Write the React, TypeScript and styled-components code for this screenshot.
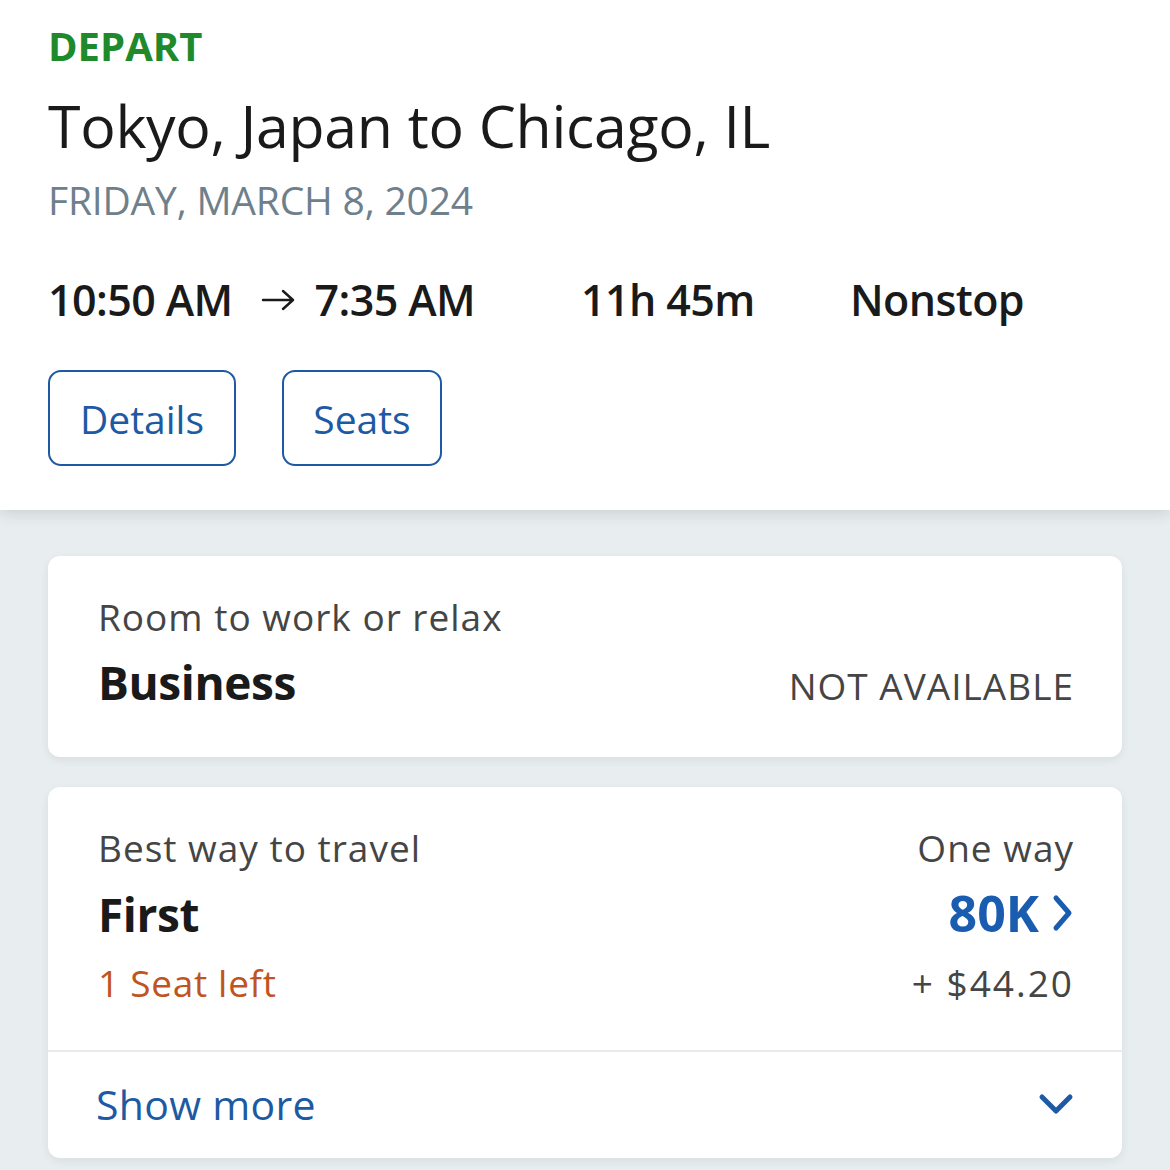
import React from "react";
import styled, { createGlobalStyle } from "styled-components";

const Global = createGlobalStyle`
  html, body { margin: 0; padding: 0; }
  body { background: #e8eef0; font-family: "Open Sans", "Noto Sans", sans-serif; }
`;

const Page = styled.div`
  width: 1170px;
  min-height: 1170px;
  background: #e8eef0;
  overflow: hidden;
`;

const Header = styled.header`
  background: #fff;
  padding: 22px 48px 44px 48px;
  box-shadow: 0 4px 14px rgba(0, 0, 0, 0.12);
  position: relative;
`;

const Label = styled.div`
  color: #1e8a2c;
  font-weight: 700;
  font-size: 40px;
  line-height: 48px;
`;

const Route = styled.h1`
  margin: 20px 0 0 0;
  font-weight: 400;
  font-size: 59px;
  line-height: 70px;
  color: #1a1a1a;
  letter-spacing: -0.3px;
`;

const DateLine = styled.div`
  margin-top: 18px;
  color: #6e808c;
  font-size: 39px;
  line-height: 44px;
  letter-spacing: -0.2px;
`;

const TimesRow = styled.div`
  margin-top: 53px;
  display: flex;
  align-items: center;
  font-size: 43px;
  line-height: 50px;
  font-weight: 600;
  color: #1a1a1a;
  letter-spacing: -0.6px;
`;

const Cell = styled.div<{ $w?: number }>`
  display: flex;
  align-items: center;
  ${(p) => (p.$w ? `width: ${p.$w}px;` : "")}
`;

const Arrow = styled.span`
  display: inline-flex;
  margin: 0 20px 0 28px;
`;

const Buttons = styled.div`
  margin-top: 45px;
  display: flex;
  gap: 46px;
`;

const OutlineButton = styled.button<{ $w: number }>`
  box-sizing: border-box;
  width: ${(p) => p.$w}px;
  height: 96px;
  border: 2px solid #1d5aa3;
  border-radius: 13px;
  background: #fff;
  color: #1d5aa3;
  font-family: inherit;
  font-size: 39px;
  padding: 0;
`;

const Cards = styled.main`
  display: flex;
  flex-direction: column;
  gap: 30px;
  padding: 46px 48px 0 48px;
`;

const Card = styled.section`
  background: #fff;
  border-radius: 12px;
  box-shadow: 0 3px 10px rgba(0, 0, 0, 0.07);
  overflow: hidden;
`;

const CardBody = styled.div<{ $pad: string }>`
  padding: ${(p) => p.$pad};
  display: grid;
  grid-template-columns: 1fr auto;
  align-items: baseline;
`;

const Sub = styled.div<{ $right?: boolean }>`
  font-size: 37px;
  line-height: 48px;
  color: #454545;
  letter-spacing: 1px;
  ${(p) => (p.$right ? "text-align: right;" : "")}
`;

const Cabin = styled.div<{ $mt: number }>`
  margin-top: ${(p) => p.$mt}px;
  font-size: 46px;
  line-height: 64px;
  font-weight: 700;
  color: #1a1a1a;
  letter-spacing: -0.4px;
`;

const NotAvail = styled.div`
  font-size: 37px;
  color: #454545;
  letter-spacing: 1px;
  text-align: right;
`;

const Price = styled.div`
  display: flex;
  align-items: center;
  justify-content: flex-end;
  gap: 13px;
  font-size: 50px;
  line-height: 64px;
  font-weight: 700;
  color: #1a5db0;
`;

const SeatsLeft = styled.div`
  margin-top: 9px;
  font-size: 37px;
  line-height: 56px;
  color: #c0541e;
  letter-spacing: 0.7px;
`;

const Fee = styled.div`
  font-size: 37px;
  line-height: 56px;
  color: #454545;
  text-align: right;
  letter-spacing: 2px;
`;

const Divider = styled.hr`
  border: none;
  border-top: 2px solid #e8ebed;
  margin: 0;
`;

const ShowMore = styled.div`
  display: flex;
  justify-content: space-between;
  align-items: center;
  padding: 24px 48px 26px 48px;
  color: #1d5aa3;
  font-size: 41px;
  line-height: 56px;
  letter-spacing: 0.3px;
`;

export default function App() {
  return (
    <Page>
      <Global />
      <Header>
        <Label>DEPART</Label>
        <Route>Tokyo, Japan to Chicago, IL</Route>
        <DateLine>FRIDAY, MARCH 8, 2024</DateLine>
        <TimesRow>
          <Cell $w={533}>
            10:50 AM
            <Arrow>
              <svg width="34" height="24" viewBox="0 0 34 24" fill="none" stroke="#1a1a1a" strokeWidth="2.4" strokeLinecap="round" strokeLinejoin="round">
                <path d="M2 12h30M22 3l10 9-10 9" />
              </svg>
            </Arrow>
            7:35 AM
          </Cell>
          <Cell $w={269}>11h 45m</Cell>
          <Cell>Nonstop</Cell>
        </TimesRow>
        <Buttons>
          <OutlineButton $w={188}>Details</OutlineButton>
          <OutlineButton $w={160}>Seats</OutlineButton>
        </Buttons>
      </Header>
      <Cards>
        <Card>
          <CardBody $pad="37px 48px 43px 50px">
            <Sub>Room to work or relax</Sub>
            <div />
            <Cabin $mt={9}>Business</Cabin>
            <NotAvail>NOT AVAILABLE</NotAvail>
          </CardBody>
        </Card>
        <Card>
          <CardBody $pad="37px 48px 39px 50px">
            <Sub>Best way to travel</Sub>
            <Sub $right>One way</Sub>
            <Cabin $mt={10}>First</Cabin>
            <Price>
              80K
              <svg width="22" height="38" viewBox="0 0 22 38" fill="none" stroke="#1a5db0" strokeWidth="5" strokeLinecap="round" strokeLinejoin="round">
                <path d="M4 4l13 15L4 34" />
              </svg>
            </Price>
            <SeatsLeft>1 Seat left</SeatsLeft>
            <Fee>+ $44.20</Fee>
          </CardBody>
          <Divider />
          <ShowMore>
            Show more
            <svg width="36" height="24" viewBox="0 0 36 24" fill="none" stroke="#1d5aa3" strokeWidth="5" strokeLinecap="round" strokeLinejoin="round">
              <path d="M4 5l14 14L32 5" />
            </svg>
          </ShowMore>
        </Card>
      </Cards>
    </Page>
  );
}
